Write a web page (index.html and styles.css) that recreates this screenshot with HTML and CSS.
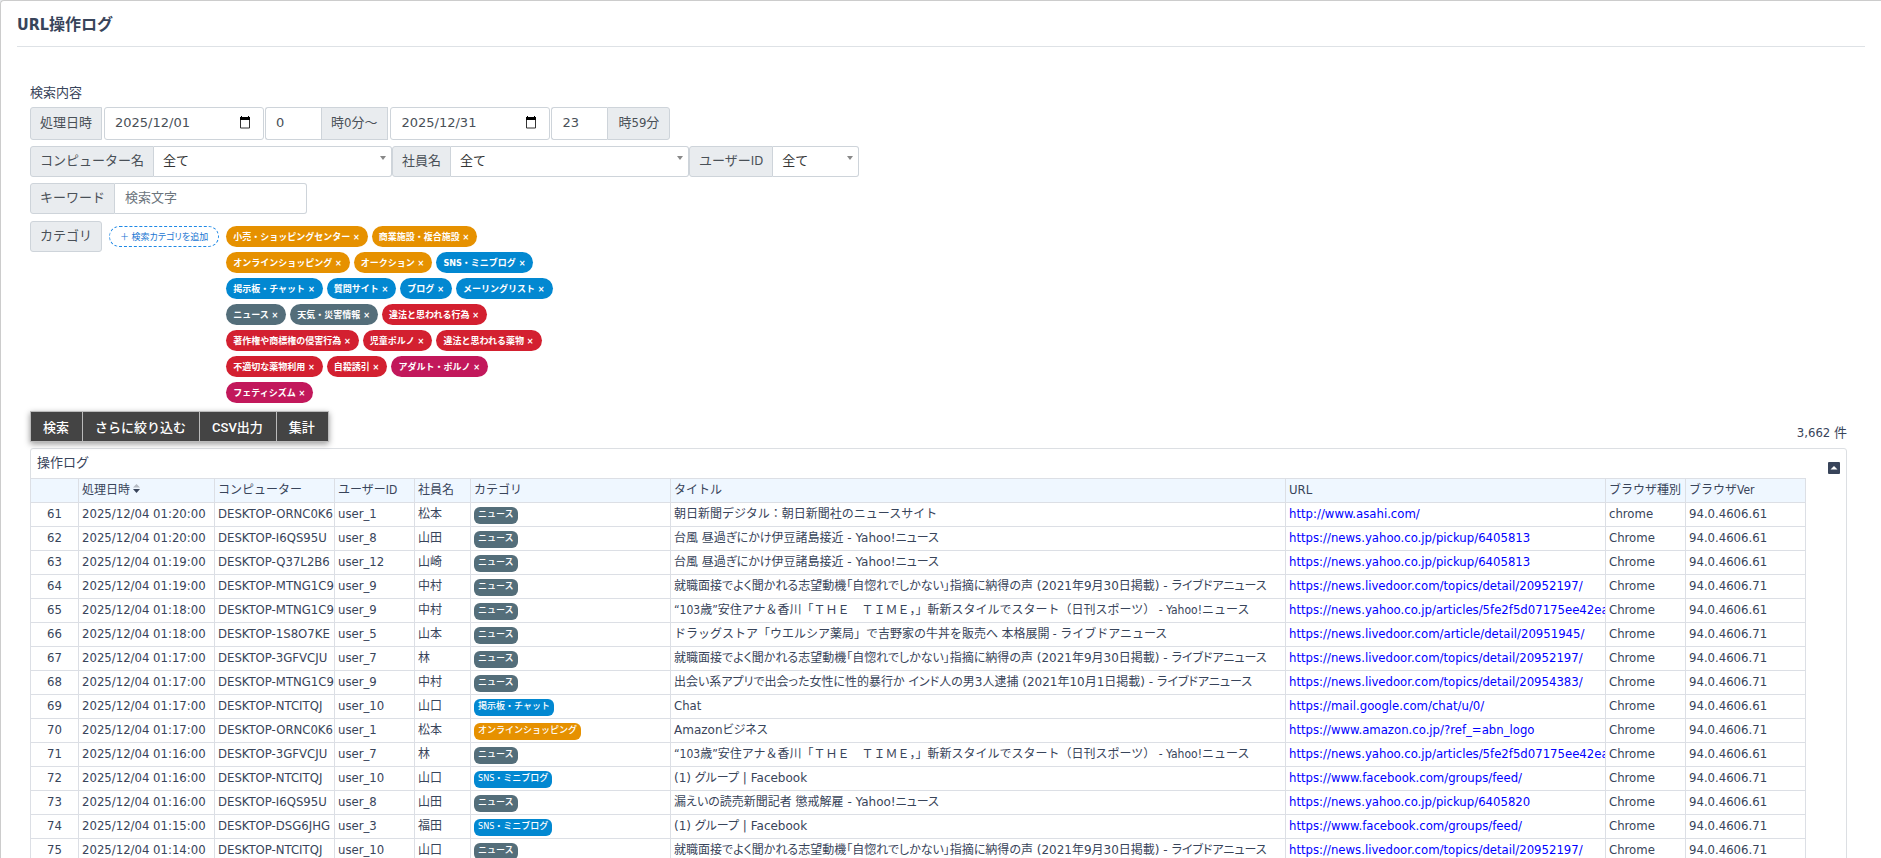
FILE: index.html
```html
<!DOCTYPE html>
<html lang="ja">

<head>
	<meta charset="UTF-8">
	<title>URL操作ログ</title>
	<link rel="stylesheet" href="styles.css">
</head>

<body>
<main class="page">
	<h1 class="page-title">URL操作ログ</h1>

	<div class="content">
		<!-- 検索条件 -->
		<form class="search">
			<p class="search-caption">検索内容</p>

			<div class="row row-date">
				<label class="addon" for="date_from">処理日時</label>
				<div class="date-box">
					<input type="text" id="date_from" value="2025/12/01">
					<svg class="calendar" viewBox="0 0 12 13"><path d="M1.500 2h9v10h-9z" fill="none" stroke="#333"/><path d="M1 1h10v3H1zM2 0h1v2H2zM9 0h1v2H9z"/></svg>
				</div>
				<input class="field hour" type="text" id="hour_from" value="0">
				<label class="addon square" for="hour_from">時0分～</label>
				<div class="date-box">
					<input type="text" id="date_to" aria-label="終了日" value="2025/12/31">
					<svg class="calendar" viewBox="0 0 12 13"><path d="M1.500 2h9v10h-9z" fill="none" stroke="#333"/><path d="M1 1h10v3H1zM2 0h1v2H2zM9 0h1v2H9z"/></svg>
				</div>
				<input class="field hour" type="text" id="hour_to" value="23">
				<label class="addon right" for="hour_to">時59分</label>
			</div>

			<div class="row">
				<label class="addon" for="computer">コンピューター名</label>
				<select class="field wide" id="computer"><option>全て</option></select>
				<label class="addon" for="employee">社員名</label>
				<select class="field wide" id="employee"><option>全て</option></select>
				<label class="addon" for="user">ユーザーID</label>
				<select class="field narrow" id="user"><option>全て</option></select>
			</div>

			<div class="row">
				<label class="addon" for="keyword">キーワード</label>
				<input class="field keyword" type="text" id="keyword" placeholder="検索文字">
			</div>

			<div class="row row-category">
				<span class="addon alone">カテゴリ</span>
				<button type="button" class="add-category">＋ 検索カテゴリを追加</button>
				<div class="tags">
					<button type="button" class="tag shop">小売・ショッピングセンター ×</button>
					<button type="button" class="tag shop">商業施設・複合施設 ×</button>
					<button type="button" class="tag shop">オンラインショッピング ×</button>
					<button type="button" class="tag shop">オークション ×</button>
					<button type="button" class="tag sns">SNS・ミニブログ ×</button>
					<button type="button" class="tag sns">掲示板・チャット ×</button>
					<button type="button" class="tag sns">質問サイト ×</button>
					<button type="button" class="tag sns">ブログ ×</button>
					<button type="button" class="tag sns">メーリングリスト ×</button>
					<button type="button" class="tag news">ニュース ×</button>
					<button type="button" class="tag news">天気・災害情報 ×</button>
					<button type="button" class="tag illegal">違法と思われる行為 ×</button>
					<button type="button" class="tag illegal">著作権や商標権の侵害行為 ×</button>
					<button type="button" class="tag illegal">児童ポルノ ×</button>
					<button type="button" class="tag illegal">違法と思われる薬物 ×</button>
					<button type="button" class="tag illegal">不適切な薬物利用 ×</button>
					<button type="button" class="tag illegal">自殺誘引 ×</button>
					<button type="button" class="tag adult">アダルト・ポルノ ×</button>
					<button type="button" class="tag adult">フェティシズム ×</button>
				</div>
			</div>
		</form>

		<div class="toolbar">
			<div class="buttons">
				<button type="button">検索</button>
				<button type="button">さらに絞り込む</button>
				<button type="button">CSV出力</button>
				<button type="button">集計</button>
			</div>
			<span class="count">3,662 件</span>
		</div>

		<!-- 操作ログ一覧 -->
		<section class="panel">
			<div class="panel-head">
				<h2>操作ログ</h2>
				<button type="button" class="toggle" aria-label="閉じる">
					<svg viewBox="0 0 12 12"><rect width="12" height="12" rx="1" fill="#38445a"/><path d="M2.500 7.500L6 4l3.500 3.500z" fill="#fff"/></svg>
				</button>
			</div>
			<table class="log">
				<colgroup>
					<col class="c-no"><col class="c-date"><col class="c-computer"><col class="c-user"><col class="c-name">
					<col class="c-category"><col class="c-title"><col class="c-url"><col class="c-browser"><col class="c-ver">
				</colgroup>
				<thead>
					<tr>
						<th></th>
						<th>処理日時 <svg class="sort" viewBox="0 0 7 9"><path d="M0 3.500L3.500 0 7 3.500z" fill="#b4bac2"/><path d="M0 5h7L3.500 9z" fill="#38445a"/></svg></th>
						<th>コンピューター</th>
						<th>ユーザーID</th>
						<th>社員名</th>
						<th>カテゴリ</th>
						<th>タイトル</th>
						<th class="latin">URL</th>
						<th>ブラウザ種別</th>
						<th>ブラウザVer</th>
					</tr>
				</thead>
				<tbody>
					<tr><td>61</td><td>2025/12/04 01:20:00</td><td>DESKTOP-ORNC0K6</td><td>user_1</td><td class="jp">松本</td><td><span class="badge news">ニュース</span></td><td class="jp">朝日新聞デジタル：朝日新聞社のニュースサイト</td><td><a href="#">http://www.asahi.com/</a></td><td>chrome</td><td>94.0.4606.61</td></tr>
					<tr><td>62</td><td>2025/12/04 01:20:00</td><td>DESKTOP-I6QS95U</td><td>user_8</td><td class="jp">山田</td><td><span class="badge news">ニュース</span></td><td class="jp tight">台風 昼過ぎにかけ伊豆諸島接近 - Yahoo!ニュース</td><td><a href="#">https://news.yahoo.co.jp/pickup/6405813</a></td><td>Chrome</td><td>94.0.4606.61</td></tr>
					<tr><td>63</td><td>2025/12/04 01:19:00</td><td>DESKTOP-Q37L2B6</td><td>user_12</td><td class="jp">山崎</td><td><span class="badge news">ニュース</span></td><td class="jp tight">台風 昼過ぎにかけ伊豆諸島接近 - Yahoo!ニュース</td><td><a href="#">https://news.yahoo.co.jp/pickup/6405813</a></td><td>Chrome</td><td>94.0.4606.61</td></tr>
					<tr><td>64</td><td>2025/12/04 01:19:00</td><td>DESKTOP-MTNG1C9</td><td>user_9</td><td class="jp">中村</td><td><span class="badge news">ニュース</span></td><td class="jp tight">就職面接でよく聞かれる志望動機「自惚れでしかない」指摘に納得の声 (2021年9月30日掲載) - ライブドアニュース</td><td><a href="#">https://news.livedoor.com/topics/detail/20952197/</a></td><td>Chrome</td><td>94.0.4606.71</td></tr>
					<tr><td>65</td><td>2025/12/04 01:18:00</td><td>DESKTOP-MTNG1C9</td><td>user_9</td><td class="jp">中村</td><td><span class="badge news">ニュース</span></td><td class="jp">“103歳”安住アナ＆香川「ＴＨＥ　ＴＩＭＥ，」斬新スタイルでスタート（日刊スポーツ） - Yahoo!ニュース</td><td><a href="#">https://news.yahoo.co.jp/articles/5fe2f5d07175ee42eab</a></td><td>Chrome</td><td>94.0.4606.61</td></tr>
					<tr><td>66</td><td>2025/12/04 01:18:00</td><td>DESKTOP-1S8O7KE</td><td>user_5</td><td class="jp">山本</td><td><span class="badge news">ニュース</span></td><td class="jp">ドラッグストア「ウエルシア薬局」で吉野家の牛丼を販売へ 本格展開 - ライブドアニュース</td><td><a href="#">https://news.livedoor.com/article/detail/20951945/</a></td><td>Chrome</td><td>94.0.4606.71</td></tr>
					<tr><td>67</td><td>2025/12/04 01:17:00</td><td>DESKTOP-3GFVCJU</td><td>user_7</td><td class="jp">林</td><td><span class="badge news">ニュース</span></td><td class="jp tight">就職面接でよく聞かれる志望動機「自惚れでしかない」指摘に納得の声 (2021年9月30日掲載) - ライブドアニュース</td><td><a href="#">https://news.livedoor.com/topics/detail/20952197/</a></td><td>Chrome</td><td>94.0.4606.71</td></tr>
					<tr><td>68</td><td>2025/12/04 01:17:00</td><td>DESKTOP-MTNG1C9</td><td>user_9</td><td class="jp">中村</td><td><span class="badge news">ニュース</span></td><td class="jp tight">出会い系アプリで出会った女性に性的暴行か インド人の男3人逮捕 (2021年10月1日掲載) - ライブドアニュース</td><td><a href="#">https://news.livedoor.com/topics/detail/20954383/</a></td><td>Chrome</td><td>94.0.4606.71</td></tr>
					<tr><td>69</td><td>2025/12/04 01:17:00</td><td>DESKTOP-NTCITQJ</td><td>user_10</td><td class="jp">山口</td><td><span class="badge sns">掲示板・チャット</span></td><td>Chat</td><td><a href="#">https://mail.google.com/chat/u/0/</a></td><td>Chrome</td><td>94.0.4606.61</td></tr>
					<tr><td>70</td><td>2025/12/04 01:17:00</td><td>DESKTOP-ORNC0K6</td><td>user_1</td><td class="jp">松本</td><td><span class="badge shop">オンラインショッピング</span></td><td class="jp tight">Amazonビジネス</td><td><a href="#">https://www.amazon.co.jp/?ref_=abn_logo</a></td><td>Chrome</td><td>94.0.4606.71</td></tr>
					<tr><td>71</td><td>2025/12/04 01:16:00</td><td>DESKTOP-3GFVCJU</td><td>user_7</td><td class="jp">林</td><td><span class="badge news">ニュース</span></td><td class="jp">“103歳”安住アナ＆香川「ＴＨＥ　ＴＩＭＥ，」斬新スタイルでスタート（日刊スポーツ） - Yahoo!ニュース</td><td><a href="#">https://news.yahoo.co.jp/articles/5fe2f5d07175ee42eab</a></td><td>Chrome</td><td>94.0.4606.61</td></tr>
					<tr><td>72</td><td>2025/12/04 01:16:00</td><td>DESKTOP-NTCITQJ</td><td>user_10</td><td class="jp">山口</td><td><span class="badge sns">SNS・ミニブログ</span></td><td class="jp tight">(1) グループ | Facebook</td><td><a href="#">https://www.facebook.com/groups/feed/</a></td><td>Chrome</td><td>94.0.4606.71</td></tr>
					<tr><td>73</td><td>2025/12/04 01:16:00</td><td>DESKTOP-I6QS95U</td><td>user_8</td><td class="jp">山田</td><td><span class="badge news">ニュース</span></td><td class="jp tight">漏えいの読売新聞記者 懲戒解雇 - Yahoo!ニュース</td><td><a href="#">https://news.yahoo.co.jp/pickup/6405820</a></td><td>Chrome</td><td>94.0.4606.61</td></tr>
					<tr><td>74</td><td>2025/12/04 01:15:00</td><td>DESKTOP-DSG6JHG</td><td>user_3</td><td class="jp">福田</td><td><span class="badge sns">SNS・ミニブログ</span></td><td class="jp tight">(1) グループ | Facebook</td><td><a href="#">https://www.facebook.com/groups/feed/</a></td><td>Chrome</td><td>94.0.4606.71</td></tr>
					<tr><td>75</td><td>2025/12/04 01:14:00</td><td>DESKTOP-NTCITQJ</td><td>user_10</td><td class="jp">山口</td><td><span class="badge news">ニュース</span></td><td class="jp tight">就職面接でよく聞かれる志望動機「自惚れでしかない」指摘に納得の声 (2021年9月30日掲載) - ライブドアニュース</td><td><a href="#">https://news.livedoor.com/topics/detail/20952197/</a></td><td>Chrome</td><td>94.0.4606.71</td></tr>
				</tbody>
			</table>
		</section>
	</div>
</main>
</body>

</html>
```
FILE: styles.css
```css
* {
	box-sizing: border-box;
}

body {
	margin: 0;
	height: 100vh;
	overflow: hidden;
	background: #e9ebee;
	color: #38445a;
	font-family: "DejaVu Sans Condensed", "Noto Sans CJK JP", sans-serif;
	font-size: 13px;
	line-height: 18px;
}

button,
input,
select {
	margin: 0;
	font-family: inherit;
	font-size: 13px;
}

.page {
	min-height: 100vh;
	padding: 0 16px;
	background: #fff;
	border: 1px solid #ccc;
	border-right: 0;
	border-radius: 4px 0 0 0;
}

.page-title {
	margin: 0;
	padding: 12px 0 9px;
	border-bottom: 1px solid #dee2e6;
	font-size: 16px;
	line-height: 24px;
}

.content {
	padding: 37px 18px 0 13px;
}

/* 検索条件 */
.search-caption {
	margin: 0 0 5px;
}

.row {
	display: flex;
	height: 31px;
	margin-bottom: 6px;
	color: #495057;
}

.row-date {
	height: 33px;
}

.addon {
	display: flex;
	align-items: center;
	padding: 0 9px 2px;
	background: #e9ecef;
	border: 1px solid #ced4da;
	border-radius: 3px 0 0 3px;
	white-space: nowrap;
}

.square {
	padding-right: 10px;
	border-radius: 0;
}

.right {
	padding: 0 10px 2px;
	border-radius: 0 3px 3px 0;
}

.alone {
	height: 31px;
	border-radius: 3px;
}

.field,
.date-box {
	background: #fff;
	border: 1px solid #ced4da;
	border-radius: 3px;
	color: #495057;
}

.date-box {
	display: flex;
	align-items: center;
	width: 160px;
	margin: 0 1px 0 2px;
	padding: 0 12px 2px 10px;
}

.date-box input {
	flex: 1;
	min-width: 0;
	padding: 0;
	border: 0;
	color: inherit;
	font-family: "DejaVu Sans", sans-serif;
}

.calendar {
	width: 12px;
	height: 13px;
}

.hour {
	width: 56px;
	padding: 0 10px 2px;
	border-right: 0;
	border-radius: 3px 0 0 3px;
	font-family: "DejaVu Sans", sans-serif;
}

select.field {
	appearance: none;
	padding: 0 9px 2px;
	border-left: 0;
	border-radius: 0 3px 3px 0;
	color: #333;
	background: #fff url("data:image/svg+xml,%3Csvg xmlns='http://www.w3.org/2000/svg' width='6' height='4'%3E%3Cpath d='M0 0h6L3 4z' fill='%23888'/%3E%3C/svg%3E") no-repeat right 5px top 9px;
}

.wide {
	width: 238px;
}

.narrow {
	width: 86px;
}

.keyword {
	width: 192px;
	padding: 0 10px 2px;
	border-left: 0;
	border-radius: 0 3px 3px 0;
}

.keyword::placeholder {
	color: #6c757d;
}

.row-category {
	height: auto;
	margin: 7px 0 8px;
}

.add-category {
	height: 21px;
	margin: 5px 7px 0;
	padding: 0 10px;
	background: #fff;
	border: 1px dashed #1e88e5;
	border-radius: 11px;
	color: #1976d2;
	font-size: 9px;
	font-feature-settings: "palt";
	line-height: 18px;
	white-space: nowrap;
}

.tags {
	display: flex;
	flex-wrap: wrap;
	align-content: flex-start;
	gap: 5px 4px;
	max-width: 340px;
	padding-top: 5px;
}

.tag {
	height: 21px;
	padding: 0 8px 0 7px;
	border: 0;
	border-radius: 11px;
	color: #fff;
	font-size: 9px;
	font-weight: bold;
	line-height: 18px;
	white-space: nowrap;
}

.shop { background: #e69100; }
.sns { background: #0288d1; }
.news { background: #546e7a; }
.illegal { background: #d32030; }
.adult { background: #c2185b; }

/* ボタン列 */
.toolbar {
	display: flex;
	justify-content: space-between;
	align-items: flex-end;
	margin-bottom: 6px;
}

.buttons {
	display: flex;
	border: 1px solid #bbb;
	box-shadow: 0 2px 6px rgba(0, 0, 0, 0.4);
}

.buttons button {
	height: 29px;
	padding: 0 13px 0 12px;
	background: #444;
	border: 0;
	color: #fff;
	font-family: Roboto, "Noto Sans CJK JP", sans-serif;
	font-weight: 500;
}

.buttons button + button {
	border-left: 1px solid #bbb;
}

/* 一覧 */
.panel {
	background: #fff;
	border: 1px solid #dcdfe3;
	border-radius: 3px 3px 0 0;
}

.panel-head {
	display: flex;
	justify-content: space-between;
	align-items: flex-end;
	height: 29px;
	padding: 0 6px 4px;
}

.panel-head h2 {
	margin: 0;
	padding-bottom: 2px;
	font-size: 13px;
	font-weight: normal;
}

.toggle {
	display: flex;
	padding: 0;
	background: none;
	border: 0;
}

.toggle svg {
	width: 12px;
	height: 12px;
}

.log {
	width: 1776px;
	margin-left: -1px;
	border-collapse: collapse;
	table-layout: fixed;
}

.c-no { width: 48px; }
.c-date { width: 136px; }
.c-computer { width: 120px; }
.c-user { width: 80px; }
.c-name { width: 56px; }
.c-category { width: 200px; }
.c-title { width: 615px; }
.c-url { width: 320px; }
.c-browser { width: 80px; }
.c-ver { width: 120px; }

.log th,
.log td {
	height: 24px;
	padding: 0 0 2px 3px;
	border: 1px solid #dcdfe5;
	overflow: hidden;
	line-height: 18px;
	text-align: left;
	white-space: nowrap;
}

.log th {
	background: #eff7ff;
	font-size: 12px;
	font-weight: normal;
}

.log .latin {
	font-size: 13px;
}

.log td:first-child {
	padding-left: 0;
	text-align: center;
}

.log .jp {
	font-size: 12px;
}

/* 長いタイトルはプロポーショナル仮名で詰める */
.log .tight {
	font-family: "DejaVu Sans", "Noto Sans CJK JP", sans-serif;
	font-feature-settings: "palt";
}

.log a {
	display: block;
	overflow: hidden;
	color: #00f;
	text-decoration: none;
}

.sort {
	width: 7px;
	height: 9px;
	vertical-align: 1px;
}

.badge {
	display: block;
	width: max-content;
	height: 17px;
	margin-top: 3px;
	padding: 0 4px;
	border-radius: 6px;
	color: #fff;
	font-size: 9px;
	font-weight: 500;
	line-height: 15px;
}
```
